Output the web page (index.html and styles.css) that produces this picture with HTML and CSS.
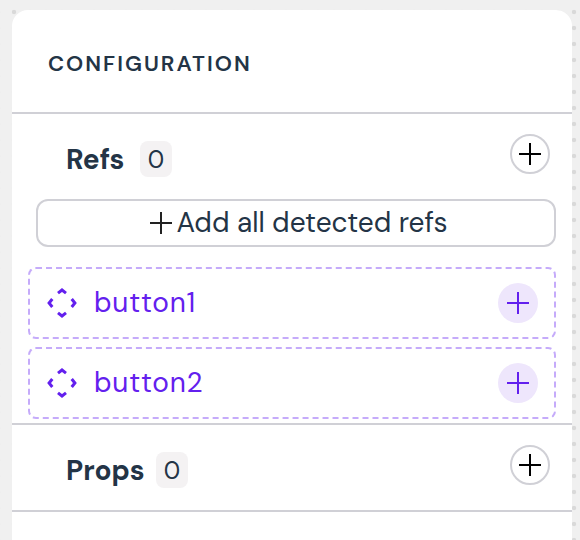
FILE: index.html
```html
<!DOCTYPE html>
<html lang="en">
<head>
<meta charset="utf-8">
<title>Configuration</title>
<link rel="stylesheet" href="styles.css">
</head>
<body>
<svg class="defs" width="0" height="0" aria-hidden="true">
  <symbol id="plus" viewBox="0 0 22 22"><path d="M11 0v22M0 11h22" fill="none" stroke="currentColor" stroke-width="2"/></symbol>
  <symbol id="move" viewBox="0 0 32 32"><path d="M12 6.2l4-3.2 4 3.2M12 25.8l4 3.2 4-3.2M6.3 12l-3.2 4 3.2 4M25.7 12l3.2 4-3.2 4" fill="none" stroke="currentColor" stroke-width="3"/></symbol>
</svg>
<main class="panel">
  <header class="panel-header"><h1 class="title">CONFIGURATION</h1></header>
  <section class="section refs">
    <div class="section-head">
      <h2 class="name refs-name">Refs</h2><span class="count">0</span>
      <button class="add"><svg class="plus"><use href="#plus"/></svg></button>
    </div>
    <button class="add-all"><svg class="plus"><use href="#plus"/></svg><span class="add-label">Add all detected refs</span></button>
    <div class="ref-row">
      <svg class="move"><use href="#move"/></svg><span class="ref-name">button1</span>
      <button class="add soft"><svg class="plus"><use href="#plus"/></svg></button>
    </div>
    <div class="ref-row">
      <svg class="move"><use href="#move"/></svg><span class="ref-name">button2</span>
      <button class="add soft"><svg class="plus"><use href="#plus"/></svg></button>
    </div>
  </section>
  <section class="section props">
    <div class="section-head">
      <h2 class="name props-name">Props</h2><span class="count">0</span>
      <button class="add"><svg class="plus"><use href="#plus"/></svg></button>
    </div>
  </section>
</main>
</body>
</html>
```
FILE: styles.css
```css
* { box-sizing: border-box; }
body {
  margin: 0;
  height: 540px;
  overflow: hidden;
  padding: 10px 8px 0 12px;
  font-family: "DM Sans", Inter, sans-serif;
  font-variation-settings: "opsz" 14;
  color: #233446;
  background: #f0f0f0 radial-gradient(circle, #d9d9d9 1.8px, transparent 2.6px) 6px 4px / 16px 16px;
}
h1, h2 { margin: 0; }
button { font: inherit; font-variation-settings: inherit; color: inherit; padding: 0; background: #fff; }
.defs { display: none; }
.panel { height: 530px; background: #fff; border-radius: 16px 16px 0 0; }
.panel-header {
  height: 104px;
  padding: 5px 36px 0;
  display: flex;
  align-items: center;
  border-bottom: 2px solid #d0d0d6;
}
.title { font-size: 22px; font-weight: 600; letter-spacing: 2px; line-height: 28px; font-variation-settings: "opsz" 11; }
.section { border-bottom: 2px solid #d0d0d6; padding: 20px 16px 0; }
.refs { height: 311px; }
.props { height: 87px; }
.section-head { display: flex; align-items: flex-start; padding: 0 6px 0 38px; height: 65px; }
.name { font-size: 28px; font-weight: 700; line-height: 36px; margin-top: 8px; }
.refs-name { width: 74px; }
.props-name { width: 90px; }
.count {
  width: 32px;
  height: 36px;
  margin-top: 7px;
  border-radius: 8px;
  background: #f4f2f3;
  font-size: 24px;
  line-height: 37px;
  text-align: center;
}
.add {
  width: 40px;
  height: 40px;
  margin-left: auto;
  display: flex;
  align-items: center;
  justify-content: center;
  border: 2px solid #d0d0d6;
  border-radius: 50%;
  color: #000;
}
.plus { width: 22px; height: 22px; flex: none; }
.add-all {
  width: 520px;
  height: 48px;
  margin: 0 8px 20px;
  padding: 0 0 1px 5px;
  display: flex;
  align-items: center;
  justify-content: center;
  gap: 5px;
  border: 2px solid #d0d0d6;
  border-radius: 12px;
  font-size: 28px;
  white-space: nowrap;
}
.add-all .plus { color: #222; margin-top: 1px; }
.ref-row {
  height: 72px;
  margin-bottom: 8px;
  padding: 0 16px;
  display: flex;
  align-items: center;
  border: 2px dashed #c5abfa;
  border-radius: 8px;
  color: #6320ee;
}
.ref-row:last-child { margin-bottom: 0; }
.move { width: 32px; height: 32px; margin-right: 16px; }
.ref-name { font-size: 28px; margin-top: -2px; letter-spacing: 0.8px; }
.soft { border: 0; background: #eee6fc; color: #6320ee; }
```
